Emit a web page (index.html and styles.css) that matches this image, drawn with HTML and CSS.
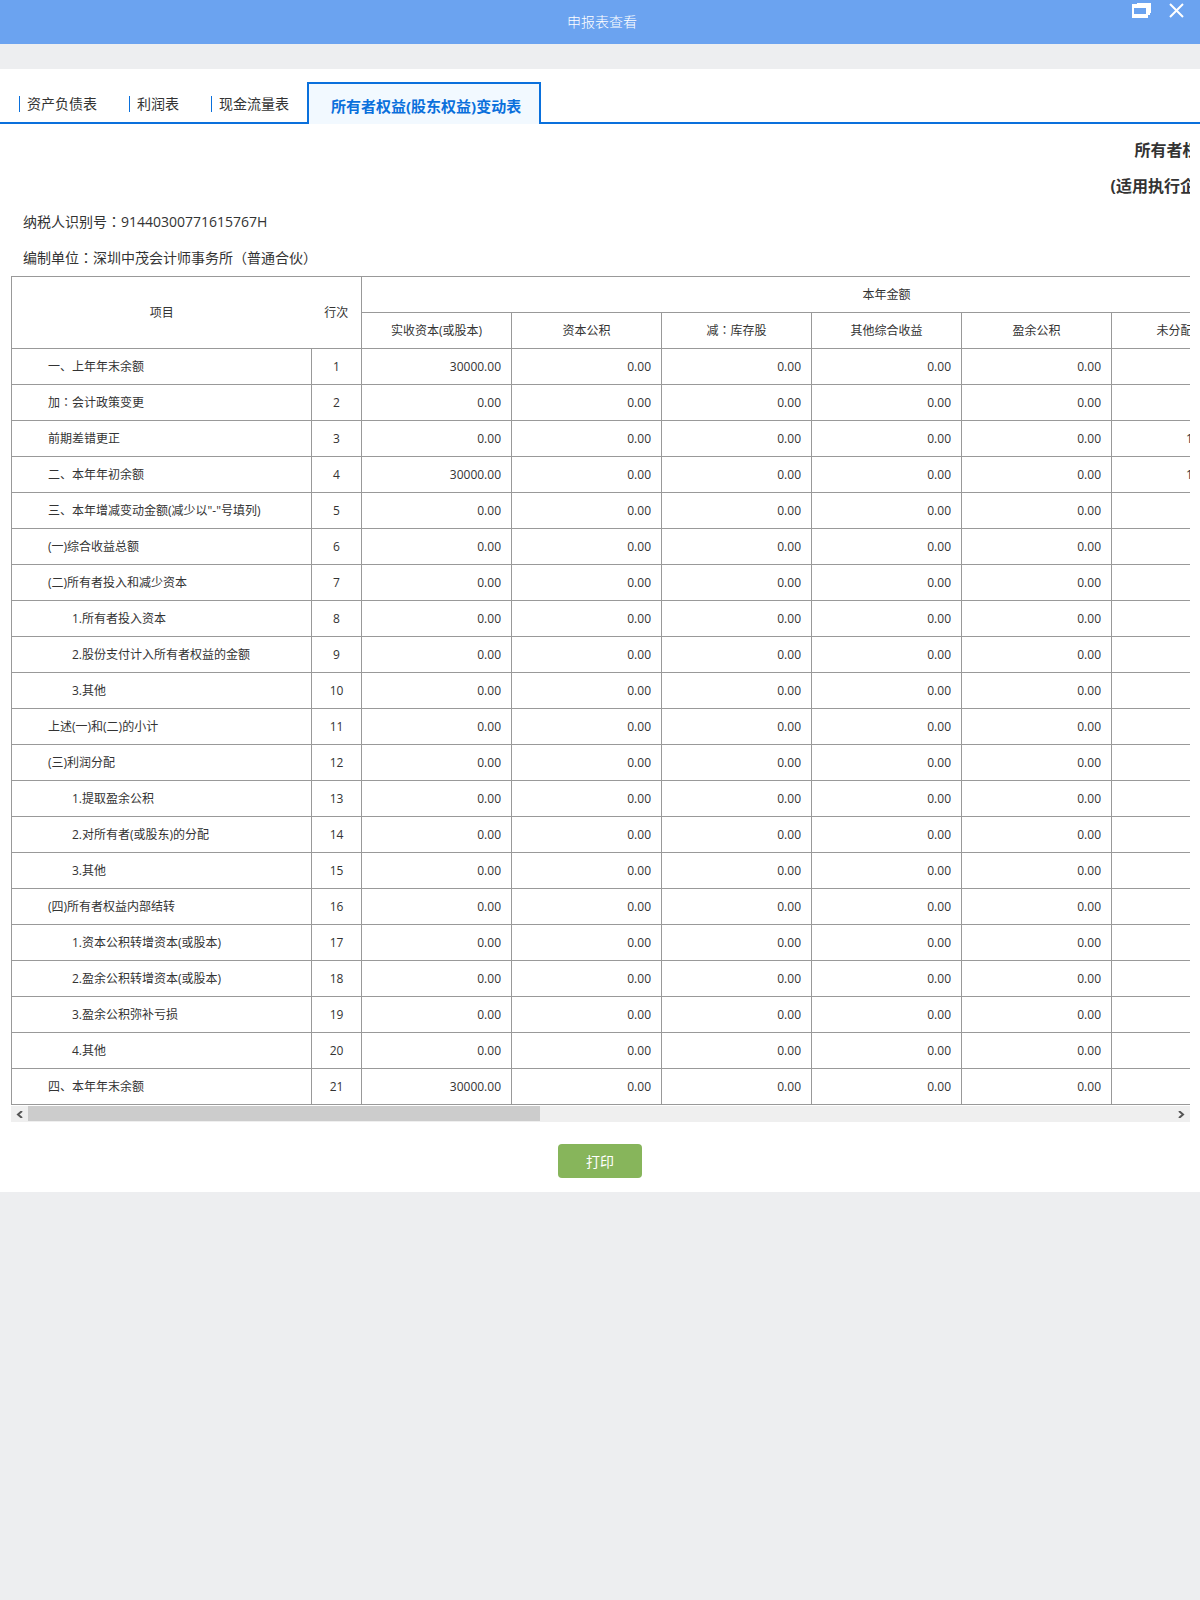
FILE: index.html
```html
<!DOCTYPE html>
<html lang="zh-CN">
<head>
<meta charset="utf-8">
<meta name="viewport" content="width=device-width, initial-scale=1">
<title>申报表查看</title>
<link rel="stylesheet" href="styles.css">
</head>
<body>
<header class="titlebar">
  <h1 class="titlebar-text">申报表查看</h1>
  <div class="window-actions">
    <button type="button" class="window-button" aria-label="还原"><svg width="19" height="15" viewBox="0 0 19 15"><path fill="#fff" fill-rule="evenodd" d="M5 0H19V10H18V12H16V15H0V1H5ZM2 5V11H14V5Z"/></svg></button>
    <button type="button" class="window-button" aria-label="关闭"><svg width="15" height="15" viewBox="0 0 15 15"><path fill="none" stroke="#fff" stroke-width="2" d="M1 1L14 14M14 1L1 14"/></svg></button>
  </div>
</header>
<main class="panel">
  <nav class="tabs">
    <a class="tab" href="#balance">资产负债表</a>
    <a class="tab" href="#profit">利润表</a>
    <a class="tab" href="#cashflow">现金流量表</a>
    <a class="tab-active" href="#equity" aria-current="page">所有者权益(股东权益)变动表</a>
  </nav>
  <section class="report" id="equity">
    <div class="scroller">
      <div class="sheet">
        <h2 class="sheet-title">所有者权益(股东权益)变动表</h2>
        <h2 class="sheet-title">(适用执行企业会计准则的一般企业)</h2>
        <p class="sheet-info">纳税人识别号<span class="mid" lang="zh-TW">：</span>91440300771615767H</p>
        <p class="sheet-info">编制单位<span class="mid" lang="zh-TW">：</span>深圳中茂会计师事务所<span class="mid" lang="zh-TW">（</span>普通合伙<span class="mid" lang="zh-TW">）</span></p>
        <table class="grid">
          <colgroup><col class="col-item"><col class="col-line"><col span="7" class="col-amount"></colgroup>
          <thead>
            <tr><th rowspan="2" class="head-item">项目</th><th rowspan="2" class="head-line">行次</th><th colspan="7">本年金额</th></tr>
            <tr><th>实收资本(或股本)</th><th>资本公积</th><th>减<span class="mid" lang="zh-TW">：</span>库存股</th><th>其他综合收益</th><th>盈余公积</th><th>未分配利润</th><th>合计</th></tr>
          </thead>
          <tbody>
            <tr><th scope="row">一、上年年末余额</th><td>1</td><td>30000.00</td><td>0.00</td><td>0.00</td><td>0.00</td><td>0.00</td><td>0.00</td><td>0.00</td></tr>
            <tr><th scope="row">加<span class="mid" lang="zh-TW">：</span>会计政策变更</th><td>2</td><td>0.00</td><td>0.00</td><td>0.00</td><td>0.00</td><td>0.00</td><td>0.00</td><td>0.00</td></tr>
            <tr><th scope="row">前期差错更正</th><td>3</td><td>0.00</td><td>0.00</td><td>0.00</td><td>0.00</td><td>0.00</td><td>1000000.00</td><td>0.00</td></tr>
            <tr><th scope="row">二、本年年初余额</th><td>4</td><td>30000.00</td><td>0.00</td><td>0.00</td><td>0.00</td><td>0.00</td><td>1000000.00</td><td>0.00</td></tr>
            <tr><th scope="row">三、本年增减变动金额(减少以"-"号填列)</th><td>5</td><td>0.00</td><td>0.00</td><td>0.00</td><td>0.00</td><td>0.00</td><td>0.00</td><td>0.00</td></tr>
            <tr><th scope="row">(一)综合收益总额</th><td>6</td><td>0.00</td><td>0.00</td><td>0.00</td><td>0.00</td><td>0.00</td><td>0.00</td><td>0.00</td></tr>
            <tr><th scope="row">(二)所有者投入和减少资本</th><td>7</td><td>0.00</td><td>0.00</td><td>0.00</td><td>0.00</td><td>0.00</td><td>0.00</td><td>0.00</td></tr>
            <tr><th scope="row" class="sub">1.所有者投入资本</th><td>8</td><td>0.00</td><td>0.00</td><td>0.00</td><td>0.00</td><td>0.00</td><td>0.00</td><td>0.00</td></tr>
            <tr><th scope="row" class="sub">2.股份支付计入所有者权益的金额</th><td>9</td><td>0.00</td><td>0.00</td><td>0.00</td><td>0.00</td><td>0.00</td><td>0.00</td><td>0.00</td></tr>
            <tr><th scope="row" class="sub">3.其他</th><td>10</td><td>0.00</td><td>0.00</td><td>0.00</td><td>0.00</td><td>0.00</td><td>0.00</td><td>0.00</td></tr>
            <tr><th scope="row">上述(一)和(二)的小计</th><td>11</td><td>0.00</td><td>0.00</td><td>0.00</td><td>0.00</td><td>0.00</td><td>0.00</td><td>0.00</td></tr>
            <tr><th scope="row">(三)利润分配</th><td>12</td><td>0.00</td><td>0.00</td><td>0.00</td><td>0.00</td><td>0.00</td><td>0.00</td><td>0.00</td></tr>
            <tr><th scope="row" class="sub">1.提取盈余公积</th><td>13</td><td>0.00</td><td>0.00</td><td>0.00</td><td>0.00</td><td>0.00</td><td>0.00</td><td>0.00</td></tr>
            <tr><th scope="row" class="sub">2.对所有者(或股东)的分配</th><td>14</td><td>0.00</td><td>0.00</td><td>0.00</td><td>0.00</td><td>0.00</td><td>0.00</td><td>0.00</td></tr>
            <tr><th scope="row" class="sub">3.其他</th><td>15</td><td>0.00</td><td>0.00</td><td>0.00</td><td>0.00</td><td>0.00</td><td>0.00</td><td>0.00</td></tr>
            <tr><th scope="row">(四)所有者权益内部结转</th><td>16</td><td>0.00</td><td>0.00</td><td>0.00</td><td>0.00</td><td>0.00</td><td>0.00</td><td>0.00</td></tr>
            <tr><th scope="row" class="sub">1.资本公积转增资本(或股本)</th><td>17</td><td>0.00</td><td>0.00</td><td>0.00</td><td>0.00</td><td>0.00</td><td>0.00</td><td>0.00</td></tr>
            <tr><th scope="row" class="sub">2.盈余公积转增资本(或股本)</th><td>18</td><td>0.00</td><td>0.00</td><td>0.00</td><td>0.00</td><td>0.00</td><td>0.00</td><td>0.00</td></tr>
            <tr><th scope="row" class="sub">3.盈余公积弥补亏损</th><td>19</td><td>0.00</td><td>0.00</td><td>0.00</td><td>0.00</td><td>0.00</td><td>0.00</td><td>0.00</td></tr>
            <tr><th scope="row" class="sub">4.其他</th><td>20</td><td>0.00</td><td>0.00</td><td>0.00</td><td>0.00</td><td>0.00</td><td>0.00</td><td>0.00</td></tr>
            <tr><th scope="row">四、本年年末余额</th><td>21</td><td>30000.00</td><td>0.00</td><td>0.00</td><td>0.00</td><td>0.00</td><td>0.00</td><td>0.00</td></tr>
          </tbody>
        </table>
      </div>
    </div>
    <div class="scrollbar">
      <button type="button" class="scroll-arrow" aria-label="向左滚动"><svg width="7" height="7" viewBox="0 0 7 7"><path fill="none" stroke="#555" stroke-width="2" d="M6 0L2 3.500L6 7"/></svg></button>
      <div class="scroll-track"><div class="scroll-thumb"></div></div>
      <button type="button" class="scroll-arrow" aria-label="向右滚动"><svg width="7" height="7" viewBox="0 0 7 7"><path fill="none" stroke="#555" stroke-width="2" d="M1 0L5 3.500L1 7"/></svg></button>
    </div>
  </section>
  <footer class="actions"><button type="button" class="print">打印</button></footer>
</main>
</body>
</html>
```
FILE: styles.css
```css
* {
  box-sizing: border-box;
}

body {
  margin: 0;
  background: #edeef0;
  color: #333;
  font-family: "Open Sans", "Noto Sans CJK SC", sans-serif;
  font-size: 14px;
  font-weight: 400;
}

button {
  margin: 0;
  padding: 0;
  border: 0;
  background: none;
  font: inherit;
  cursor: pointer;
}

svg {
  display: block;
}

/* Full-width punctuation centred in its cell */
.mid {
  font-family: "Noto Sans CJK TC", sans-serif;
  line-height: 1;
}

.titlebar {
  display: grid;
  grid-template-columns: 1fr auto 1fr;
  height: 44px;
  background: #6ba3f0;
  color: #fff;
}

.titlebar-text {
  grid-column: 2;
  margin: 0;
  padding-left: 4px;
  font-size: 14px;
  font-weight: 300;
  line-height: 44px;
}

.window-actions {
  display: flex;
  justify-content: flex-end;
  align-items: flex-start;
  gap: 18px;
  padding: 3px 16px 0 0;
}

.panel {
  margin-top: 25px;
  background: #fff;
}

.tabs {
  display: flex;
  align-items: flex-end;
  height: 55px;
  padding-left: 5px;
  border-bottom: 2px solid #0a70dc;
}

.tab {
  margin: 0 18px 10px 14px;
  padding-left: 7px;
  border-left: 1px solid #0a70dc;
  color: #333;
  line-height: 16px;
  text-decoration: none;
}

.tab-active {
  height: 42px;
  margin-bottom: -2px;
  padding: 0 18px 0 22px;
  border: 2px solid #0a70dc;
  border-bottom: 0;
  background: #f2f9ff;
  color: #0a70dc;
  font-size: 15px;
  font-weight: 700;
  line-height: 44px;
  text-decoration: none;
}

.report {
  margin: 0 10px 0 11px;
}

.scroller {
  overflow-x: auto;
  scrollbar-width: none;
}

.sheet {
  width: 2450px;
  padding-top: 8px;
}

.sheet-title {
  margin: 0;
  font-size: 16px;
  font-weight: 700;
  line-height: 36px;
  text-align: center;
}

.sheet-info {
  margin: 0;
  padding-left: 12px;
  line-height: 36px;
}

.grid {
  width: 1401px;
  border-collapse: collapse;
  table-layout: fixed;
  font-size: 12px;
}

.col-item {
  width: 300px;
}

.col-line {
  width: 50px;
}

.col-amount {
  width: 150px;
}

.grid th,
.grid td {
  height: 36px;
  padding: 0 10px;
  border: 1px solid #999;
  font-weight: 400;
  line-height: 18px;
  white-space: nowrap;
}

.grid td {
  text-align: right;
}

.grid .head-item {
  border-right: 0;
}

.grid .head-line {
  border-left: 0;
}

.grid tbody th {
  padding-left: 36px;
  text-align: left;
}

.grid tbody .sub {
  padding-left: 60px;
}

.grid .head-line,
.grid td:nth-child(2) {
  padding: 0;
  text-align: center;
}

.scrollbar {
  display: flex;
  height: 16px;
  margin-top: 1px;
  background: #efefef;
}

.scroll-arrow {
  display: grid;
  place-items: center;
  width: 17px;
}

.scroll-track {
  flex: 1;
}

.scroll-thumb {
  width: 44.7%;
  height: 15px;
  background: #ccc;
}

.actions {
  display: flex;
  justify-content: center;
  padding: 22px 0 14px;
}

.print {
  width: 84px;
  height: 34px;
  border-radius: 4px;
  background: #87b55b;
  color: #fff;
}
```
